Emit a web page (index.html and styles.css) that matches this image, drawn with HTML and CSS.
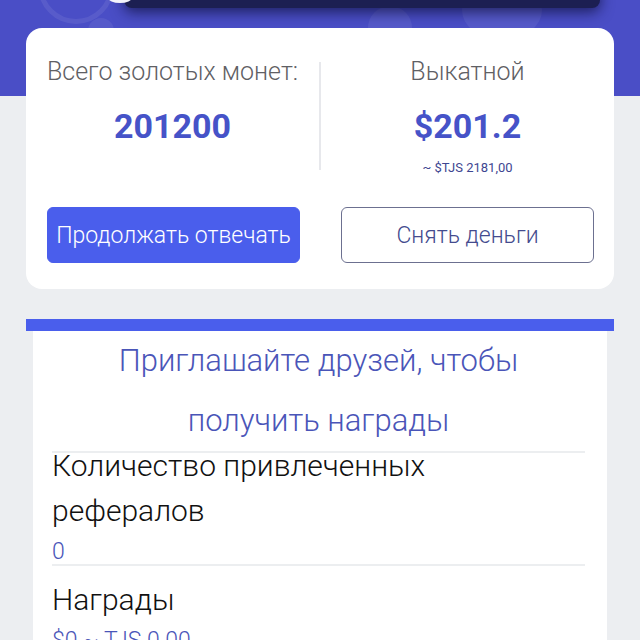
FILE: index.html
```html
<!DOCTYPE html>
<html lang="ru">
<head>
    <meta charset="UTF-8">
    <meta name="viewport" content="width=device-width, initial-scale=1.0">
    <title>Кошелёк</title>
    <link rel="stylesheet" href="styles.css">
</head>
<body>
    <!-- decorative header band -->
    <div class="header-deco">
        <span class="ring"></span>
        <span class="dot dot-a"></span>
        <span class="dot dot-b"></span>
        <span class="dot dot-c"></span>
        <span class="top-bar"></span>
        <span class="top-chip"></span>
    </div>

    <div class="page">
        <div class="balance-card">
            <div class="stats">
                <div class="stat">
                    <div class="stat-label">Всего золотых монет:</div>
                    <div class="stat-value">201200</div>
                </div>
                <div class="stat-divider"></div>
                <div class="stat">
                    <div class="stat-label">Выкатной</div>
                    <div class="stat-value">$201.2</div>
                    <div class="stat-note">~ $TJS 2181,00</div>
                </div>
            </div>
            <div class="actions">
                <button class="btn btn-primary">Продолжать отвечать</button>
                <button class="btn btn-outline">Снять деньги</button>
            </div>
        </div>

        <div class="invite">
            <div class="invite-bar"></div>
            <div class="invite-body">
                <h2 class="invite-title">Приглашайте друзей, чтобы получить награды</h2>
                <div class="invite-row">
                    <div class="row-label">Количество привлеченных рефералов</div>
                    <div class="row-value">0</div>
                </div>
                <div class="invite-row invite-row-next">
                    <div class="row-label">Награды</div>
                    <div class="row-value">$0 ~ TJS 0.00</div>
                </div>
            </div>
        </div>
    </div>
</body>
</html>
```

FILE: styles.css
```css
body {
    margin: 0;
    font-family: Roboto, "Noto Sans", sans-serif;
    background: linear-gradient(#4a4ec6 0, #4a4ec6 96px, #eceef1 96px);
    overflow: hidden;
}
.header-deco {
    position: absolute;
    top: 0;
    left: 0;
    width: 640px;
    height: 96px;
    overflow: hidden;
}
.header-deco span {
    position: absolute;
    display: block;
}
.ring {
    left: 38px;
    top: -52px;
    width: 66px;
    height: 66px;
    border-radius: 50%;
    border: 5px solid rgba(255, 255, 255, 0.08);
}
.dot {
    border-radius: 50%;
    background: rgba(255, 255, 255, 0.07);
}
.dot-a {
    left: 88px;
    top: 18px;
    width: 26px;
    height: 26px;
}
.dot-b {
    left: 368px;
    top: 6px;
    width: 44px;
    height: 44px;
}
.dot-c {
    left: 462px;
    top: -20px;
    width: 80px;
    height: 60px;
}
.top-bar {
    left: 124px;
    top: -20px;
    width: 476px;
    height: 28px;
    border-radius: 8px;
    background: #1c1f52;
    box-shadow: 0 4px 14px rgba(10, 12, 50, 0.7);
}
.top-chip {
    left: 108px;
    top: -8px;
    width: 24px;
    height: 11px;
    border-radius: 50%;
    background: #f4f4fb;
}
.page {
    position: relative;
    padding: 28px 26px 0;
}
.balance-card {
    background: #fff;
    border-radius: 16px;
    padding: 30px 0 26px;
}
.stats {
    display: flex;
    align-items: flex-start;
}
.stat {
    flex: 1;
    text-align: center;
}
.stat-divider {
    width: 2px;
    height: 108px;
    margin-top: 4px;
    background: #e7e8ec;
}
.stat-label {
    font-size: 25px;
    font-weight: 300;
    color: #5f6064;
    line-height: 28px;
}
.stat-value {
    margin-top: 20px;
    font-size: 34px;
    font-weight: 700;
    color: #4653c8;
    line-height: 40px;
}
.stat-note {
    margin-top: 14px;
    font-size: 13px;
    color: #3e4691;
    line-height: 16px;
}
.actions {
    display: flex;
    justify-content: space-between;
    margin-top: 31px;
    padding: 0 20px 0 21px;
}
.btn {
    width: 253px;
    height: 56px;
    border-radius: 6px;
    font-family: Roboto, "Noto Sans", sans-serif;
    font-size: 23px;
    font-weight: 300;
    padding: 0;
}
.btn-primary {
    background: #4a5eec;
    border: 1px solid #4a5eec;
    color: #fff;
}
.btn-outline {
    background: #fff;
    border: 1px solid #6c7090;
    color: #444b8e;
}
.invite {
    margin-top: 30px;
}
.invite-bar {
    height: 12px;
    background: #4a5eec;
}
.invite-body {
    margin: 0 7px;
    background: #fff;
    padding: 0 22px 40px 19px;
    min-height: 400px;
}
.invite-title {
    margin: 0;
    padding: 0 40px;
    font-size: 31px;
    font-weight: 300;
    color: #4a55b8;
    text-align: center;
    line-height: 60px;
}
.invite-row {
    border-top: 2px solid #eceef0;
    padding-top: 1px;
}
.row-label {
    margin-top: -11px;
    font-size: 30px;
    font-weight: 300;
    color: #111;
    line-height: 45px;
    padding-right: 120px;
}
.invite-row-next .row-label {
    margin-top: 10px;
}
.row-value {
    margin-top: 7px;
    font-size: 23px;
    font-weight: 300;
    color: #4a55b8;
    line-height: 24px;
}
```
